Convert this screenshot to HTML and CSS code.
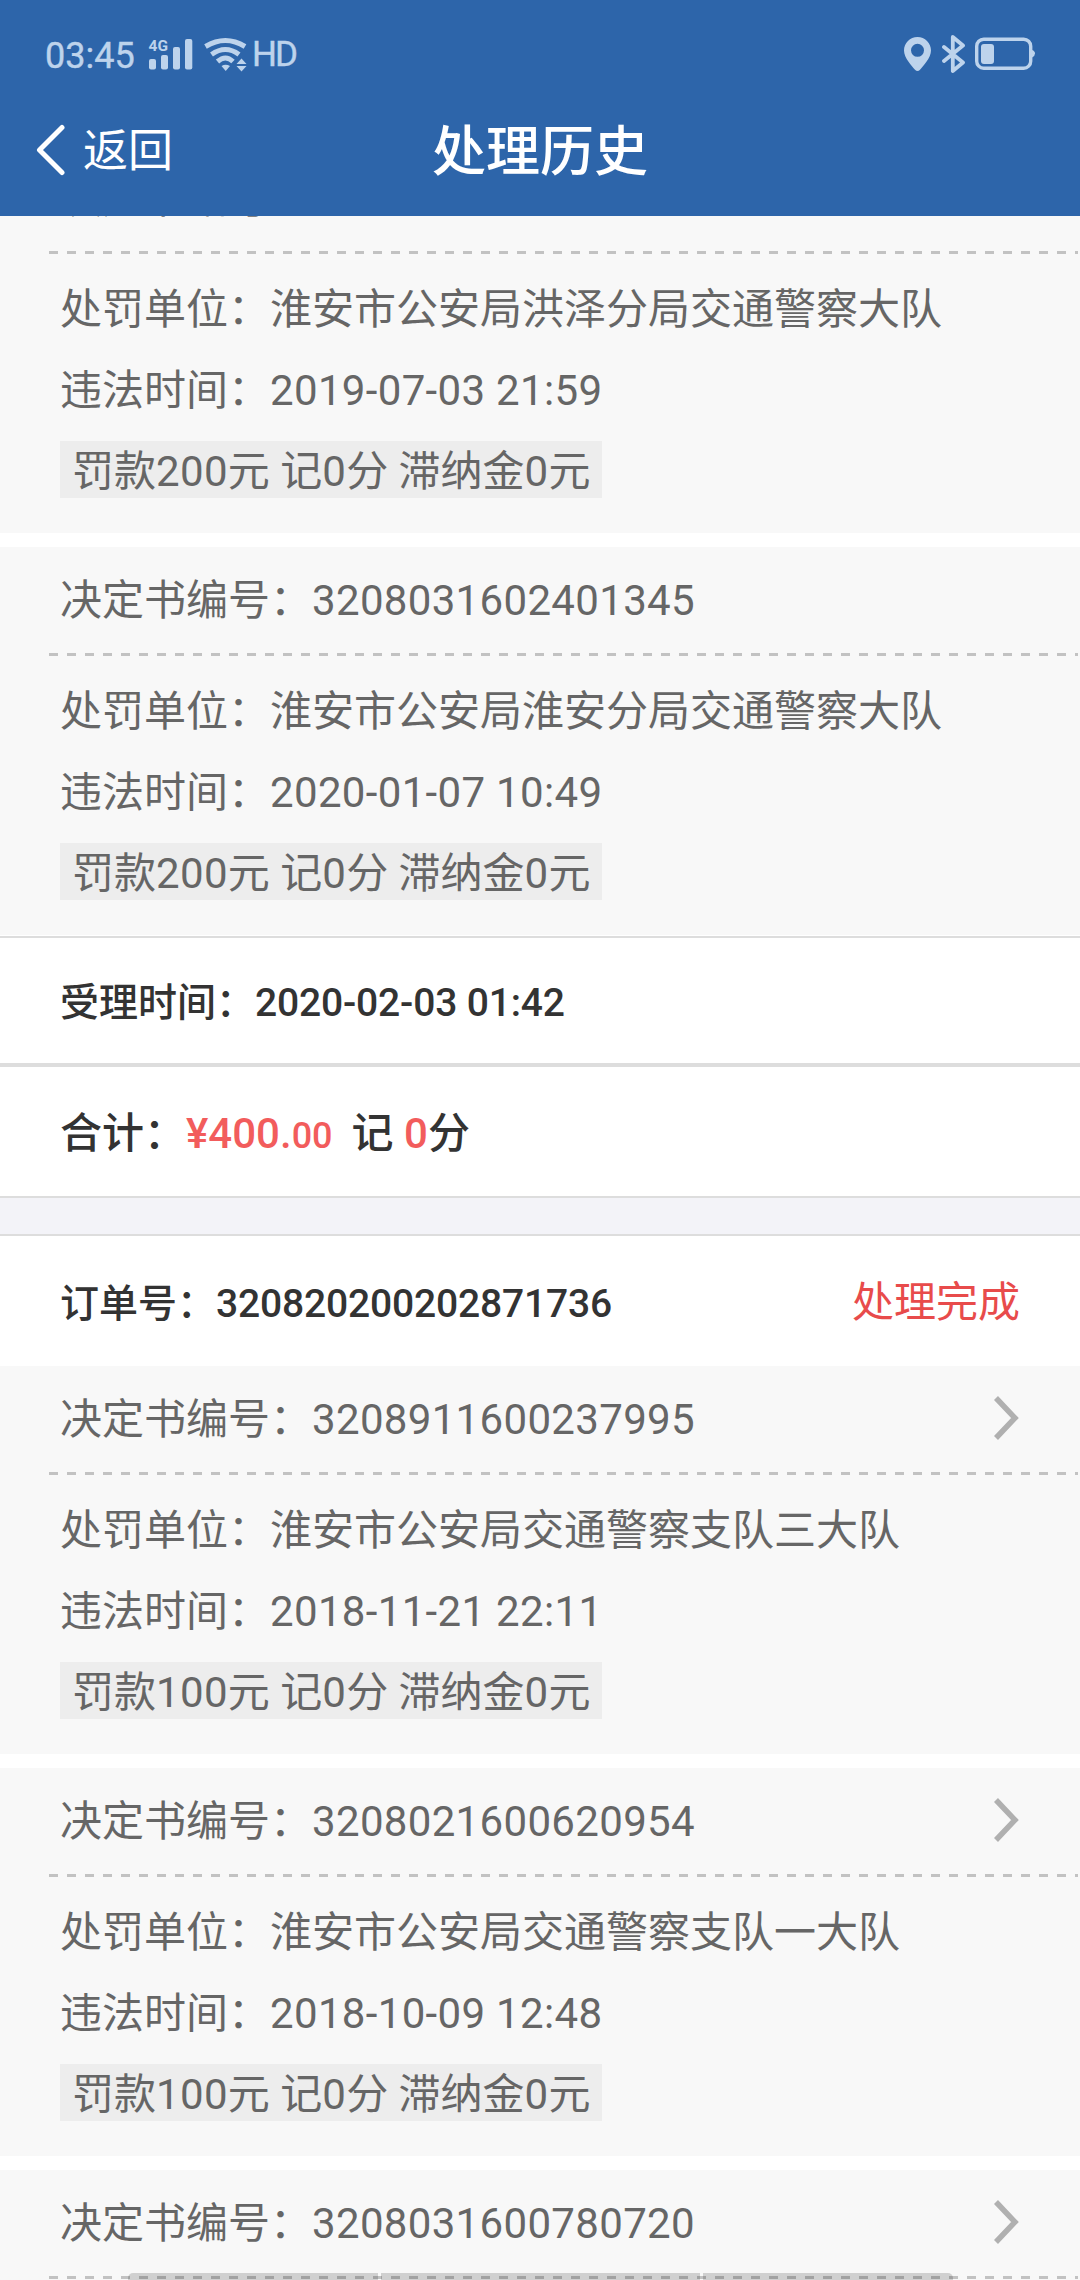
FILE: index.html
```html
<!DOCTYPE html>
<html lang="zh-CN">
    <head>
        <meta charset="utf-8">
        <title>处理历史</title>
        <link rel="stylesheet" href="styles.css">
    </head>
    <body>
        <header class="header">
            <div class="status-bar">
                <div class="status-left">
                    <span class="clock">03:45</span>
                    <svg class="signal" width="46" height="34" viewBox="148 37 46 34">
                        <text class="net" x="148.5" y="51">4G</text>
                        <rect x="149" y="59" width="7" height="10.5" rx="2"/>
                        <rect x="161" y="55" width="7" height="14.5" rx="2"/>
                        <rect x="173" y="47" width="7" height="22.5" rx="2"/>
                        <rect x="185" y="39" width="7.3" height="30.5" rx="2"/>
                    </svg>
                    <svg class="wifi" width="44" height="36" viewBox="203 36 44 36">
                        <g class="arcs">
                            <path d="M205.5 46.5Q225.5 34.500 245 46.500"/>
                            <path d="M211.500 54.500Q225.500 44.500 239 54.500"/>
                            <path d="M217.500 61.500Q225.500 54.500 233 61.500"/>
                        </g>
                        <path d="M221.500 66Q225.500 63.500 230 66L225.700 71Z"/>
                        <path d="M236.500 64L241.500 58.500L246.500 64ZM236.500 66L241.500 71.500L246.500 66Z"/>
                    </svg>
                    <span class="hd">HD</span>
                </div>
                <div class="status-right">
                    <svg width="27" height="34" viewBox="0 0 27 34">
                        <path fill-rule="evenodd" d="M13.500 0C6 0 0 6 0 13.500C0 21 8 29 11 32.800Q13.500 35.200 16 32.800C19 29 27 21 27 13.500C27 6 21 0 13.500 0ZM13.500 6.800A6.500 6.500 0 1 1 13.500 19.800A6.500 6.500 0 1 1 13.500 6.800Z"/>
                    </svg>
                    <svg class="bluetooth" width="24" height="38" viewBox="0 0 24 38">
                        <path d="M2 12L21 27.500L10.800 36V2L21 10.500L2 26"/>
                    </svg>
                    <svg class="battery" width="61" height="34" viewBox="0 0 61 34">
                        <rect class="case" x="1.700" y="2.200" width="54" height="29" rx="7"/>
                        <rect x="6" y="7" width="13" height="20" rx="3"/>
                        <path d="M57 13Q60 14 60 16.500Q60 19 57 20.500Z"/>
                    </svg>
                </div>
            </div>
            <nav class="nav">
                <a class="back">
                    <svg width="30" height="52" viewBox="0 0 30 52">
                        <path d="M26 3.500L3.500 26L26 48.500"/>
                    </svg>
                    <span>返回</span>
                </a>
                <h1>处理历史</h1>
            </nav>
        </header>

        <main class="list">
            <section class="order order-first">
                <div class="item">
                    <div class="item-head"><span>决定书编号：</span></div>
                    <div class="dash"></div>
                    <div class="item-body">
                        <p>处罚单位：淮安市公安局洪泽分局交通警察大队</p>
                        <p>违法时间：<span class="num">2019-07-03 21:59</span></p>
                        <div class="tag">罚款<span class="num">200</span>元 记<span class="num">0</span>分 滞纳金<span class="num">0</span>元</div>
                    </div>
                </div>
                <div class="item">
                    <div class="item-head"><span>决定书编号：<span class="num">3208031602401345</span></span></div>
                    <div class="dash"></div>
                    <div class="item-body">
                        <p>处罚单位：淮安市公安局淮安分局交通警察大队</p>
                        <p>违法时间：<span class="num">2020-01-07 10:49</span></p>
                        <div class="tag">罚款<span class="num">200</span>元 记<span class="num">0</span>分 滞纳金<span class="num">0</span>元</div>
                    </div>
                </div>
                <div class="accept">受理时间：<b>2020-02-03 01:42</b></div>
                <div class="total">合计：<b class="red">¥400.<small>00</small></b><span class="points">记 <b class="red">0</b>分</span></div>
            </section>

            <section class="order">
                <div class="order-head">
                    <span class="order-no">订单号：<b>320820200202871736</b></span>
                    <span class="state">处理完成</span>
                </div>
                <div class="item">
                    <div class="item-head">
                        <span>决定书编号：<span class="num">3208911600237995</span></span>
                        <svg class="arrow" width="26" height="46" viewBox="0 0 26 46"><path d="M3 3L22 23L3 43"/></svg>
                    </div>
                    <div class="dash"></div>
                    <div class="item-body">
                        <p>处罚单位：淮安市公安局交通警察支队三大队</p>
                        <p>违法时间：<span class="num">2018-11-21 22:11</span></p>
                        <div class="tag">罚款<span class="num">100</span>元 记<span class="num">0</span>分 滞纳金<span class="num">0</span>元</div>
                    </div>
                </div>
                <div class="item">
                    <div class="item-head">
                        <span>决定书编号：<span class="num">3208021600620954</span></span>
                        <svg class="arrow" width="26" height="46" viewBox="0 0 26 46"><path d="M3 3L22 23L3 43"/></svg>
                    </div>
                    <div class="dash"></div>
                    <div class="item-body">
                        <p>处罚单位：淮安市公安局交通警察支队一大队</p>
                        <p>违法时间：<span class="num">2018-10-09 12:48</span></p>
                        <div class="tag">罚款<span class="num">100</span>元 记<span class="num">0</span>分 滞纳金<span class="num">0</span>元</div>
                    </div>
                </div>
                <div class="item">
                    <div class="item-head">
                        <span>决定书编号：<span class="num">3208031600780720</span></span>
                        <svg class="arrow" width="26" height="46" viewBox="0 0 26 46"><path d="M3 3L22 23L3 43"/></svg>
                    </div>
                    <div class="dash"></div>
                </div>
            </section>
        </main>

        <!-- top edge of the bottom bar -->
        <div class="bottom-bar"><i></i><i></i><i></i></div>
    </body>
</html>
```
FILE: styles.css
```css
*{
    box-sizing: border-box;
}
body{
    margin: 0;
    height: 2280px;
    position: relative;
    overflow: hidden;
    display: flex;
    flex-direction: column;
    background: #f8f8f8;
    color: #666;
    font-family: Roboto, "Noto Sans CJK SC", sans-serif;
    font-size: 42px;
}
h1, p{
    margin: 0;
}
svg{
    display: block;
    flex: none;
}

.header{
    flex: none;
    height: 216px;
    background: #2d65aa;
    color: #fff;
}
.status-bar{
    display: flex;
    justify-content: space-between;
    height: 84px;
    padding: 24px 44px 0 45px;
    color: #bdd3ec;
    fill: #bdd3ec;
}
.status-left, .status-right{
    display: flex;
    align-items: center;
    height: 60px;
}
.clock{
    width: 103px;
    padding-top: 3px;
    font-size: 36px;
    -webkit-text-stroke: .4px #bdd3ec;
}
.net{
    font-size: 15.5px;
    font-weight: 700;
}
.wifi{
    margin-left: 9px;
}
.arcs{
    fill: none;
    stroke: #bdd3ec;
    stroke-width: 5;
}
.hd{
    margin-left: 5px;
    padding-top: 1px;
    font-size: 35px;
    letter-spacing: -2px;
    -webkit-text-stroke: .4px #bdd3ec;
}
.bluetooth{
    margin-left: 11px;
    fill: none;
    stroke: #bdd3ec;
    stroke-width: 3.8;
    stroke-linejoin: round;
    stroke-linecap: round;
}
.battery{
    margin-left: 9px;
}
.case{
    fill: none;
    stroke: #bdd3ec;
    stroke-width: 3.4;
}
.nav{
    display: grid;
    grid-template-columns: 1fr auto 1fr;
    align-items: center;
    height: 132px;
}
.back{
    display: flex;
    align-items: center;
    gap: 17px;
    padding-left: 36px;
    font-size: 45px;
}
.back span{
    padding-bottom: 5px;
}
.back path{
    fill: none;
    stroke: #fff;
    stroke-width: 5;
    stroke-linejoin: round;
    stroke-linecap: round;
}
.nav h1{
    padding-top: 5px;
    font-size: 54px;
    font-weight: 500;
    line-height: 1;
}

.list{
    flex: 1;
    min-height: 0;
    overflow: hidden;
}
/* scrolled so the head of the first item is under the header */
.order-first{
    margin-top: -71px;
}
.order{
    background: #fff;
    border-bottom: 2px solid #ddd;
}
.order + .order{
    margin-top: 36px;
    border-top: 2px solid #ddd;
    border-bottom: 0;
    box-shadow: 0 -36px 0 #f3f3f8;
}
.item{
    height: 388px;
    background: #f8f8f8;
}
.item + .item{
    margin-top: 14px;
}
.item-head{
    display: flex;
    justify-content: space-between;
    height: 106px;
    padding: 0 61px 0 60px;
    line-height: 108px;
    white-space: nowrap;
}
.num{
    letter-spacing: .33px;
}
.arrow{
    margin-top: 29px;
}
.arrow path{
    fill: none;
    stroke: #b0b0b0;
    stroke-width: 5.5;
}
.dash{
    height: 3px;
    margin: 0 2px 0 49px;
    background: repeating-linear-gradient(to right, #c2c2c2 0, #c2c2c2 9px, transparent 9px, transparent 18px);
}
.item-body{
    padding: 14px 60px 0;
}
.item-body p{
    height: 81px;
    line-height: 83px;
    white-space: nowrap;
}
.tag{
    width: fit-content;
    height: 57px;
    margin-top: 11px;
    padding: 0 11px 0 12px;
    line-height: 62px;
    white-space: nowrap;
    background: #ededed;
}

b{
    font-weight: 500;
}
.accept, .total, .order-head{
    padding: 0 60px;
    color: #333;
    font-weight: 500;
    white-space: nowrap;
}
.accept{
    height: 131px;
    margin-top: 1px;
    border-top: 2px solid #ddd;
    border-bottom: 4px solid #ddd;
    font-size: 39px;
    line-height: 131px;
}
.accept b, .order-no b{
    letter-spacing: -.17px;
}
.total{
    height: 129px;
    line-height: 134px;
}
.red{
    color: #f25c5c;
}
.red small{
    font-size: 36px;
}
.points{
    margin-left: 19px;
}
.order-head{
    display: flex;
    justify-content: space-between;
    height: 130px;
    line-height: 136px;
}
.order-no{
    font-size: 39px;
}
.state{
    color: #e84b4b;
    font-weight: 400;
    line-height: 133px;
}

.bottom-bar{
    position: absolute;
    left: 128px;
    bottom: 0;
    display: grid;
    grid-template-columns: 250px 319px 250px;
    gap: 3px;
    width: 825px;
    height: 7px;
}
.bottom-bar i{
    background: rgba(0, 0, 0, .16);
}
.bottom-bar i:first-child{
    border-top-left-radius: 5px;
}
.bottom-bar i:last-child{
    border-top-right-radius: 5px;
}
```
